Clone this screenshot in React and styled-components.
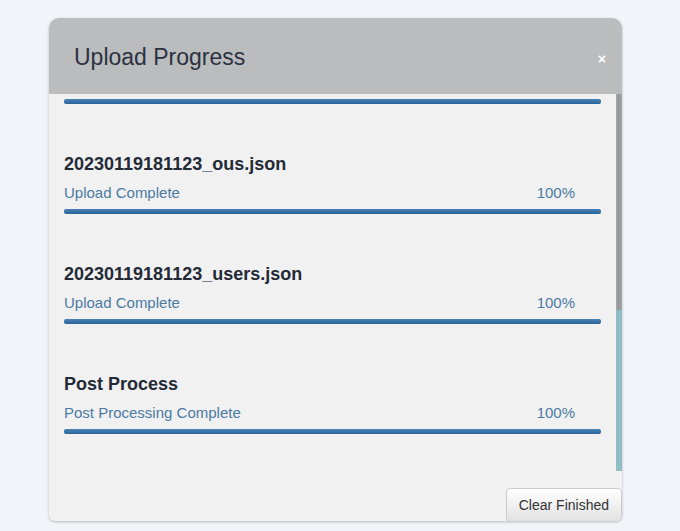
import React, { useEffect, useRef, useState } from 'react';
import styled, { createGlobalStyle } from 'styled-components';

const GlobalStyle = createGlobalStyle`
  html, body {
    margin: 0;
    padding: 0;
    background: #f1f4f9;
    font-family: "Liberation Sans", Arial, sans-serif;
  }
`;

const Page = styled.div`
  padding: 18px 0 0 49px;
  height: 531px;
  box-sizing: border-box;
  overflow: hidden;
`;

const Modal = styled.div`
  width: 573px;
  height: 503px;
  display: flex;
  flex-direction: column;
  background: #f1f1f1;
  border-radius: 10px 10px 6px 6px;
  overflow: hidden;
  box-shadow: 0 1px 3px rgba(0, 0, 0, 0.25);
`;

const Header = styled.div`
  height: 76px;
  flex-shrink: 0;
  display: flex;
  align-items: center;
  justify-content: space-between;
  padding: 3px 16px 0 25px;
  box-sizing: border-box;
  background: #bbbcbe;
`;

const Title = styled.h2`
  margin: 0;
  font-size: 23px;
  font-weight: 400;
  color: #2b3140;
`;

const Close = styled.button`
  border: none;
  background: none;
  padding: 0;
  margin-top: 2px;
  color: #ffffff;
  font-family: "Liberation Sans", Arial, sans-serif;
  font-size: 14px;
  font-weight: 700;
  cursor: pointer;
`;

const Body = styled.div`
  height: 377px;
  flex-shrink: 0;
  display: flex;
`;

const Scroller = styled.div`
  flex: 1;
  overflow-y: scroll;
  scrollbar-width: none;
  padding: 15px 15px 37px 15px;
  box-sizing: border-box;
  display: flex;
  flex-direction: column;
  gap: 49px;

  &::-webkit-scrollbar {
    display: none;
  }
`;

const Rail = styled.div`
  width: 6px;
  flex-shrink: 0;
  display: flex;
  flex-direction: column;
`;

const Gutter = styled.div`
  flex: 1;
  background: linear-gradient(to right, #a6a7ab, #949599 50%, #a6a7ab);
`;

const Thumb = styled.div`
  flex-shrink: 0;
  background: #8fbfc5;
`;

const Item = styled.div`
  display: flex;
  flex-direction: column;
  flex-shrink: 0;
`;

const FileName = styled.div`
  font-size: 18px;
  line-height: 22px;
  font-weight: 700;
  color: #232a36;
  margin-bottom: 9px;
`;

const StatusRow = styled.div`
  display: flex;
  justify-content: space-between;
  padding-right: 26px;
  margin-bottom: 7px;
  font-size: 15px;
  line-height: 18px;
  color: #4a7aa2;
`;

const Track = styled.div`
  height: 5px;
  border-radius: 2px;
  background: #dcdcdc;
  overflow: hidden;
`;

const Fill = styled.div`
  height: 100%;
  background: linear-gradient(to bottom, #4783b8, #2c6396);
`;

const Footer = styled.div`
  flex: 1;
  display: flex;
  justify-content: flex-end;
  align-items: flex-start;
  padding: 17px 0 0 0;
`;

const Button = styled.button`
  height: 34px;
  padding: 0 12px;
  font-family: "Liberation Sans", Arial, sans-serif;
  font-size: 14px;
  color: #333333;
  border: 1px solid #cccccc;
  border-radius: 4px;
  background: linear-gradient(to bottom, #ffffff, #e2e2e2);
  cursor: pointer;
`;

const items = [
  { name: '20230119181123_roles.json', status: 'Upload Complete', pct: 100 },
  { name: '20230119181123_groups.json', status: 'Upload Complete', pct: 100 },
  { name: '20230119181123_devices.json', status: 'Upload Complete', pct: 100 },
  { name: '20230119181123_computers.json', status: 'Upload Complete', pct: 100 },
  { name: '20230119181123_domains.json', status: 'Upload Complete', pct: 100 },
  { name: '20230119181123_ous.json', status: 'Upload Complete', pct: 100 },
  { name: '20230119181123_users.json', status: 'Upload Complete', pct: 100 },
  { name: 'Post Process', status: 'Post Processing Complete', pct: 100 },
];

const App = () => {
  const scrollRef = useRef(null);
  const [thumb, setThumb] = useState(161);

  useEffect(() => {
    const el = scrollRef.current;
    if (el) {
      el.scrollTop = el.scrollHeight;
      setThumb(Math.round((el.clientHeight / el.scrollHeight) * el.clientHeight));
    }
  }, []);

  return (
    <>
      <GlobalStyle />
      <Page>
        <Modal>
          <Header>
            <Title>Upload Progress</Title>
            <Close>×</Close>
          </Header>
          <Body>
            <Scroller ref={scrollRef}>
              {items.map((item) => (
                <Item key={item.name}>
                  <FileName>{item.name}</FileName>
                  <StatusRow>
                    <span>{item.status}</span>
                    <span>{item.pct}%</span>
                  </StatusRow>
                  <Track>
                    <Fill style={{ width: `${item.pct}%` }} />
                  </Track>
                </Item>
              ))}
            </Scroller>
            <Rail>
              <Gutter />
              <Thumb style={{ height: thumb }} />
            </Rail>
          </Body>
          <Footer>
            <Button>Clear Finished</Button>
          </Footer>
        </Modal>
      </Page>
    </>
  );
};

export default App;
